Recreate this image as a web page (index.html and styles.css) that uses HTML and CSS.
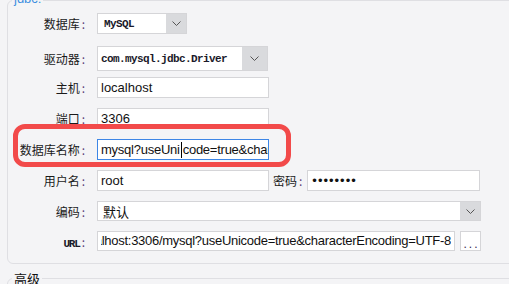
FILE: index.html
```html
<!DOCTYPE html>
<html lang="zh-CN">
<head>
  <meta charset="UTF-8" />
  <meta name="viewport" content="width=device-width, initial-scale=1.0"/>
  <title>数据连接</title>
  <link rel="stylesheet" href="styles.css">
</head>
<body>

  <fieldset class="group">
    <legend class="group-title">jdbc:</legend>

    <div class="form">
      <div class="form-row">
        <label class="field-label">数据库<span class="colon">:</span></label>
        <div class="select select-db">
          <span class="select-value mono">MySQL</span>
          <span class="select-btn"><svg width="9" height="5" viewBox="0 0 9 5"><path d="M0.5 0.5 L4.5 4.5 L8.5 0.5" fill="none" stroke="#555" stroke-width="1"/></svg></span>
        </div>
      </div>

      <div class="form-row row-driver">
        <label class="field-label">驱动器<span class="colon">:</span></label>
        <div class="select select-driver">
          <span class="select-value mono">com.mysql.jdbc.Driver</span>
          <span class="select-btn"><svg width="9" height="5" viewBox="0 0 9 5"><path d="M0.5 0.5 L4.5 4.5 L8.5 0.5" fill="none" stroke="#555" stroke-width="1"/></svg></span>
        </div>
      </div>

      <div class="form-row row-host">
        <label class="field-label">主机<span class="colon">:</span></label>
        <div class="field">localhost</div>
      </div>

      <div class="form-row">
        <label class="field-label">端口<span class="colon">:</span></label>
        <div class="field">3306</div>
      </div>

      <div class="form-row row-marked">
        <label class="field-label">数据库名称<span class="colon">:</span></label>
        <div class="field field-focus">mysql?useUni<span class="caret"></span>code=true&amp;characterEncoding=UTF-8</div>
        <div class="highlight"></div>
      </div>

      <div class="form-row">
        <label class="field-label">用户名<span class="colon">:</span></label>
        <div class="field">root</div>
        <label class="field-label inline">密码<span class="colon">:</span></label>
        <div class="field field-pwd">••••••••</div>
      </div>

      <div class="form-row">
        <label class="field-label">编码<span class="colon">:</span></label>
        <div class="select select-enc">
          <span class="select-value cjk">默认</span>
          <span class="select-btn"><svg width="9" height="5" viewBox="0 0 9 5"><path d="M0.5 0.5 L4.5 4.5 L8.5 0.5" fill="none" stroke="#555" stroke-width="1"/></svg></span>
        </div>
      </div>

      <div class="form-row">
        <label class="field-label"><span class="latin">URL</span><span class="colon">:</span></label>
        <div class="field field-url">
          <span class="url-clip"><span>jdbc:mysql://localhost:3306/mysql?useUnicode=true&amp;characterEncoding=UTF-8</span></span>
        </div>
        <button class="more-btn">...</button>
      </div>
    </div>
  </fieldset>

  <fieldset class="group group-advanced">
    <legend class="group-title advanced">高级</legend>
  </fieldset>

</body>
</html>
```

FILE: styles.css
```css
html, body {
  margin: 0;
  height: 100%;
  overflow: hidden;
  background-color: #f4f4f6;
}

body {
  font-family: 'Liberation Sans', 'Noto Sans CJK SC', sans-serif;
  font-size: 13px;
  color: #111;
}

.group {
  margin: -9px 0 0 7px;
  width: 600px;
  padding: 3px 0 12px 4px;
  border: 1px solid #dfdfe3;
  border-radius: 6px;
}

.group-title {
  padding: 0 2px 4px;
  font-size: 13px;
  line-height: 15px;
  color: #3d8fe0;
}

.group-advanced {
  margin-top: 7px;
  min-height: 40px;
}

.group-title.advanced {
  padding-bottom: 0;
  font-family: 'Noto Sans CJK SC', sans-serif;
  color: #111;
}

.form {
  display: flex;
  flex-direction: column;
  gap: 10px;
}

.form-row {
  display: flex;
  align-items: center;
  position: relative;
}

.row-driver {
  margin-top: 2px;
}

.row-host {
  margin-top: -4px;
}

.field-label {
  flex: none;
  width: 73px;
  margin-right: 12px;
  text-align: right;
  font-family: 'Noto Sans CJK SC', sans-serif;
  font-size: 12px;
  color: #1a1a1a;
}

.field-label.inline {
  width: auto;
  margin: 0 5px 0 4px;
}

.colon {
  margin-left: 2px;
  color: #5c3d78;
}

.latin {
  font-family: 'Liberation Mono', monospace;
  font-weight: bold;
  font-size: 11px;
  letter-spacing: -1.2px;
  color: #1a1a2a;
}

.field {
  box-sizing: border-box;
  flex: none;
  width: 172px;
  height: 21px;
  padding: 0 3px;
  line-height: 19px;
  border: 1px solid #d5d5d8;
  background-color: #fff;
  white-space: nowrap;
  overflow: hidden;
}

.field-focus {
  border-color: #3d86e6;
  letter-spacing: -0.25px;
}

.caret {
  display: inline-block;
  width: 1px;
  height: 16px;
  margin: 0 1px;
  background-color: #000;
  vertical-align: -4px;
}

.field-pwd {
  width: 173px;
  letter-spacing: 1px;
  padding-left: 4px;
}

.field-url {
  display: flex;
  width: 358px;
  height: 20px;
  line-height: 18px;
  letter-spacing: -0.28px;
}

.url-clip {
  flex: 1;
  display: flex;
  justify-content: flex-end;
  overflow: hidden;
}

.more-btn {
  box-sizing: border-box;
  width: 21px;
  height: 20px;
  margin-left: 5px;
  padding: 0;
  border: 1px solid #d5d5d8;
  background-color: #fff;
  font-family: 'Liberation Sans', sans-serif;
  font-size: 12px;
  line-height: 24px;
  letter-spacing: 2px;
  text-indent: 2px;
  color: #3a2a50;
}

.select {
  box-sizing: border-box;
  flex: none;
  display: flex;
  height: 21px;
  border: 1px solid #d5d5d8;
  background-color: #fff;
}

.select-value {
  flex: 1;
  display: flex;
  align-items: center;
  padding-left: 3px;
  white-space: nowrap;
  overflow: hidden;
}

.select-btn {
  flex: none;
  width: 20px;
  display: flex;
  align-items: center;
  justify-content: center;
  background-color: #d9dadd;
}

.mono {
  font-family: 'Liberation Mono', monospace;
  font-weight: bold;
  font-size: 11px;
  letter-spacing: -0.6px;
  color: #1a1a2a;
}

.cjk {
  font-family: 'Noto Sans CJK SC', sans-serif;
  font-size: 13px;
  padding-left: 5px;
}

.select-db {
  width: 90px;
}

.select-db .select-value {
  padding-left: 6px;
}

.select-driver {
  width: 171px;
  height: 25px;
}

.select-driver .select-btn {
  width: 25px;
}

.select-enc {
  width: 384px;
  height: 20px;
}

.highlight {
  position: absolute;
  left: 1px;
  top: -15px;
  width: 278px;
  height: 43px;
  box-sizing: border-box;
  border: 5px solid #f24a4a;
  border-radius: 12px;
  pointer-events: none;
}
```
